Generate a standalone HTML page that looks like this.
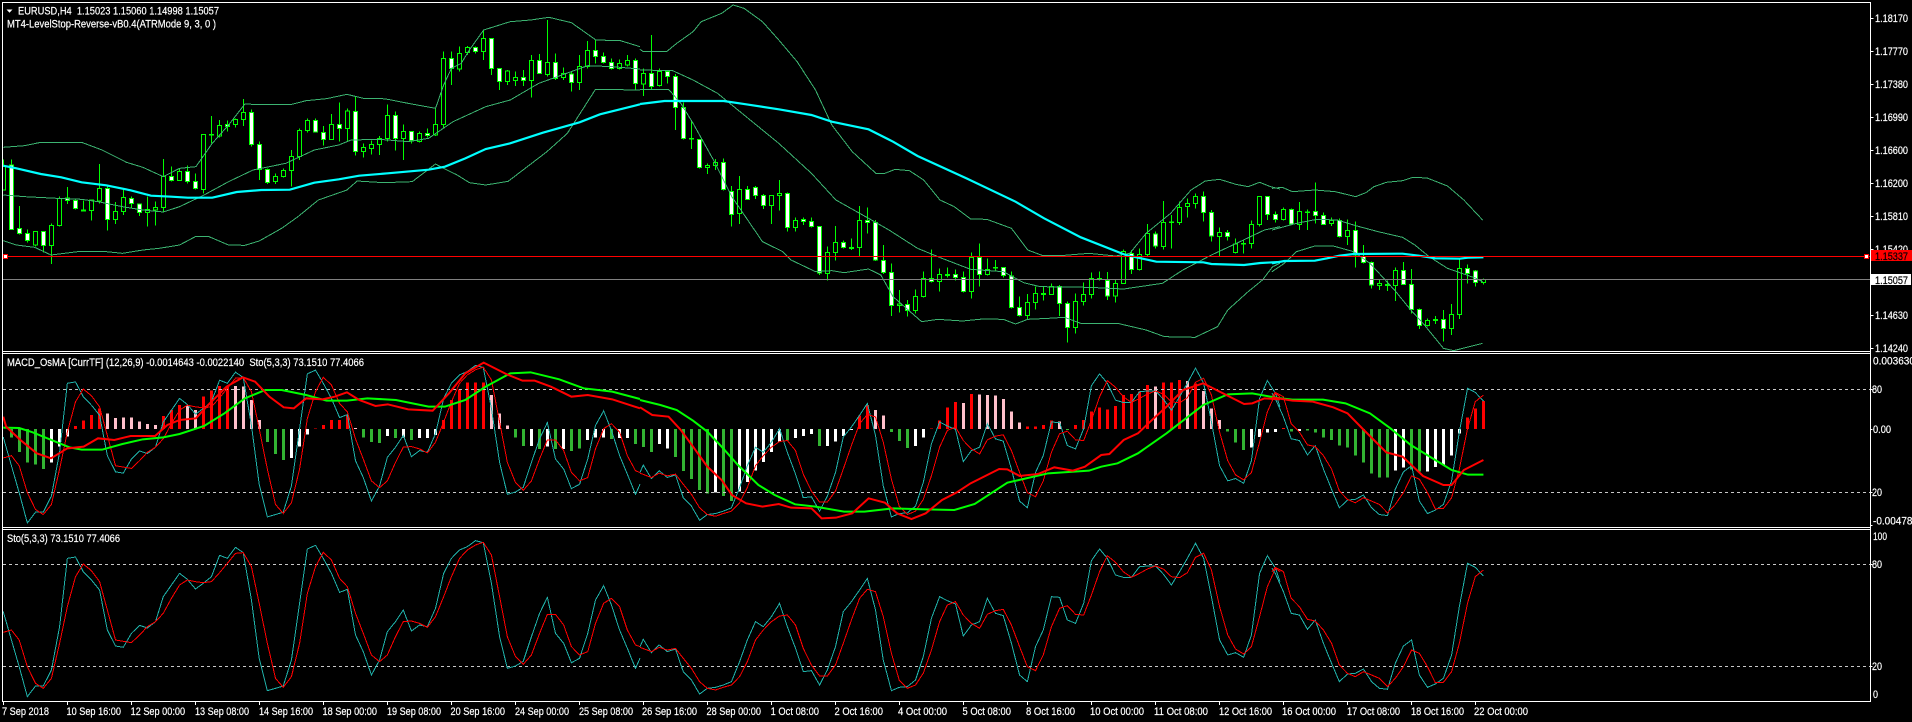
<!DOCTYPE html>
<html><head><meta charset="utf-8"><title>EURUSD,H4</title>
<style>
html,body{margin:0;padding:0;background:#000;width:1912px;height:722px;overflow:hidden}
svg{display:block}
svg *{vector-effect:non-scaling-stroke}
text{font-family:"Liberation Sans",sans-serif;font-size:11px;fill:#fff;stroke:#fff;stroke-width:.2}
.dk{fill:#000;stroke:#000}
.band{fill:none;stroke:#3cb371;stroke-width:1;shape-rendering:crispEdges}
.ma{fill:none;stroke:#00ffff;stroke-width:2.2}
.teal{fill:none;stroke:#20b2aa;stroke-width:1;shape-rendering:crispEdges}
.rs{fill:none;stroke:#ff0000;stroke-width:1;shape-rendering:crispEdges}
.tg{fill:none;stroke:#00ff00;stroke-width:2}
.tr{fill:none;stroke:#ff0000;stroke-width:2}
</style></head><body>
<svg width="1912" height="722" viewBox="0 0 1912 722" xmlns="http://www.w3.org/2000/svg">
<rect width="1912" height="722" fill="#000"/>
<defs>
<clipPath id="c1"><rect x="3" y="3" width="1867" height="348"/></clipPath>
<clipPath id="c2"><rect x="3" y="354" width="1867" height="173"/></clipPath>
<g id="sto">
<g transform="scale(.40816,.33333)">
<polyline class="teal" points="8,785 28,870 47,950 67,1040 87,1008 106,1008 126,960 146,830 165,625 185,621 204,665 224,690 244,720 263,840 283,888 302,892 322,850 342,826 361,834 381,815 400,740 420,705 440,670 459,688 479,717 498,700 518,680 538,616 557,625 577,592 596,608 616,750 635,925 655,1022 675,1015 694,1008 714,930 734,760 753,597 773,586 792,625 812,670 832,727 851,718 871,855 890,905 910,975 930,930 949,845 969,815 988,780 1008,843 1028,825 1047,830 1067,775 1087,670 1106,625 1126,600 1145,590 1165,572 1184,578 1204,700 1224,860 1243,955 1263,948 1282,934 1302,860 1322,790 1341,742 1361,850 1381,880 1400,938 1420,925 1440,850 1459,750 1479,707 1498,765 1518,840 1537,895 1557,955 1568,925"/>
<polyline class="rs" points="8,847 28,840 47,870 67,950 87,1000 106,1015 126,985 146,880 165,770 185,680 204,642 224,662 244,695 263,780 283,870 322,878 342,855 361,830 381,815 400,790 420,745 440,705 459,690 479,695 498,698 518,695 538,668 557,640 577,610 596,608 616,650 635,760 655,880 675,985 694,1012 714,980 734,880 753,730 773,650 792,607 812,630 832,685 851,710 871,790 890,850 910,915 930,935 949,915 969,860 988,815 1008,813 1028,820 1047,832 1067,800 1087,740 1106,680 1126,625 1145,600 1165,585 1184,577 1204,615 1224,740 1243,860 1263,920 1282,943 1302,915 1322,850 1341,793 1361,793 1381,825 1400,890 1420,915 1440,905 1459,820 1479,760 1498,745 1518,770 1537,840 1557,885 1568,890"/>
</g>
<g transform="translate(640,0) scale(.40816,.33333)">
<polyline class="teal" points="0,890 8,868 28,908 47,885 67,905 87,897 106,965 126,990 146,1032 165,1015 185,1012 204,1005 224,995 244,935 263,870 283,815 302,830 322,800 342,760 361,830 381,895 400,965 420,962 440,1005 459,960 479,890 498,785 518,755 538,720 557,685 577,780 596,930 616,1022 635,1012 655,1010 675,990 694,920 714,805 734,740 753,752 773,762 792,858 812,825 832,815 851,745 871,790 890,797 910,880 930,975 949,995 969,890 988,840 1008,740 1028,742 1047,810 1067,820 1087,760 1106,632 1126,597 1145,625 1165,675 1184,682 1204,682 1224,650 1243,648 1263,648 1282,672 1302,705 1322,665 1341,625 1361,580 1381,625 1400,740 1420,870 1440,915 1459,908 1479,922 1498,855 1518,670 1537,617 1557,655 1568,695"/>
<polyline class="rs" points="0,892 28,905 47,892 67,900 87,895 106,925 126,955 146,995 165,1015 185,1020 204,1012 224,1005 244,980 263,935 283,870 302,840 322,815 342,798 361,795 381,825 400,895 420,945 440,978 459,978 479,945 498,880 518,810 538,745 557,718 577,725 596,800 616,910 635,990 655,1015 675,1005 694,970 714,900 734,815 753,765 773,755 792,795 812,820 832,835 851,793 871,782 890,778 910,825 930,890 949,950 969,962 988,915 1008,830 1028,775 1047,767 1067,793 1087,795 1106,735 1126,665 1145,617 1165,637 1184,665 1204,682 1224,670 1243,657 1263,648 1282,657 1302,680 1322,683 1341,668 1361,622 1381,610 1400,660 1420,770 1440,855 1459,897 1479,912 1498,890 1518,800 1537,710 1557,655 1568,665"/>
</g>
<g transform="translate(1272,0) scale(.40816,.33333)">
<polyline class="teal" points="0,655 8,670 28,725 47,790 67,795 87,838 106,810 126,880 146,940 165,995 185,972 204,970 224,957 244,995 263,1015 283,1018 302,940 322,888 342,870 361,975 381,1012 400,1002 420,985 440,915 459,770 479,640 498,652 518,678"/>
<polyline class="rs" points="0,665 8,652 28,665 47,745 67,770 87,808 106,813 126,840 146,880 165,945 185,970 204,980 224,965 244,975 263,985 283,1010 302,985 322,950 342,900 361,910 381,950 400,998 420,997 440,965 459,880 479,760 498,680 518,660"/>
</g>
</g>
</defs>

<!-- main panel -->
<g clip-path="url(#c1)">
<g transform="translate(.5,0) scale(1,.33333)" shape-rendering="crispEdges">
<path fill="none" stroke="#00ff00" d="M3 478V570M11 478V688M19 618V703M27 688V728M35 693V740M43 693V758M51 670V792M59 590V680M67 561V612M75 595V628M83 602V632M91 598V662M99 492V610M107 560V692M115 606V672M123 567V645M131 590V626M139 610V648M147 590V680M155 605V677M163 477V638M171 500V545M179 505V543M187 497V550M195 520V568M203 402V580M211 348V430M219 360V412M227 362V395M235 355V382M243 297V378M251 328V440M259 425V540M267 506V552M275 520V552M283 505V532M291 450V560M299 385V480M307 355V398M315 355V398M323 378V437M331 342V420M339 307V425M347 325V425M355 290V467M363 430V473M371 422V463M379 408V465M387 313V425M395 335V452M403 373V480M411 393V430M419 395V427M427 385V412M435 325V408M443 155V383M451 155V255M459 140V215M467 138V165M475 140V160M483 90V180M491 115V225M499 205V270M507 210V255M515 215V258M523 210V258M531 165V293M539 162V222M547 60V230M555 160V240M563 203V240M571 215V275M579 165V270M587 123V205M595 120V190M603 158V190M611 175V208M619 178V208M627 165V200M635 175V272M643 205V288M651 105V268M659 205V260M667 212V250M675 222V390M683 307V418M691 360V447M699 418V505M707 490V522M715 477V510M723 475V572M731 558V680M739 528V672M747 558V600M755 558V597M763 582V627M771 585V672M779 540V632M787 578V695M795 652V695M803 652V675M811 652V682M819 678V825M827 740V842M835 678V782M843 722V745M851 715V750M859 618V770M867 622V700M875 660V783M883 735V822M891 790V948M899 870V938M907 900V950M915 868V940M923 815V892M931 748V848M939 805V875M947 803V832M955 808V842M963 815V878M971 758V895M979 730V860M987 775V826M995 780V815M1003 802V832M1011 815V925M1019 890V950M1027 882V960M1035 860V928M1043 858V902M1051 850V885M1059 855V948M1067 905V1028M1075 880V1000M1083 848V917M1091 818V895M1099 815V842M1107 816V900M1115 840V908M1123 748V852M1131 750V822M1139 745V812M1147 672V768M1155 695V745M1163 603V748M1171 645V745M1179 605V675M1187 595V652M1195 580V625M1203 575V665M1211 630V725M1219 682V768M1227 690V722M1235 715V760M1243 720V760M1251 662V745M1259 588V680M1267 588V660M1275 635V668M1283 622V662M1291 625V675M1299 606V690M1307 628V690M1315 548V670M1323 637V675M1331 652V678M1339 655V712M1347 658V735M1355 665V803M1363 735V790M1371 785V865M1379 840V870M1387 842V873M1395 802V903M1403 786V855M1411 807V940M1419 925V987M1427 955V980M1435 948V972M1443 930V1025M1451 912V1005M1459 775V957M1467 793V850M1475 810V860M1483 836V853"/>
<path fill="#000" stroke="#00ff00" d="M1 500h4V570h-4zM33 695h4V735h-4zM49 676h4V737h-4zM57 595h4V677h-4zM81 630h4V633h-4zM89 600h4V632h-4zM97 565h4V603h-4zM113 634h4V658h-4zM121 592h4V634h-4zM145 629h4V638h-4zM153 622h4V630h-4zM161 530h4V622h-4zM177 514h4V541h-4zM201 403h4V568h-4zM209 403h4V405h-4zM217 376h4V408h-4zM233 358h4V373h-4zM241 337h4V358h-4zM273 529h4V544h-4zM281 511h4V529h-4zM289 470h4V512h-4zM297 391h4V470h-4zM305 361h4V392h-4zM329 373h4V419h-4zM345 333h4V385h-4zM361 443h4V454h-4zM369 433h4V445h-4zM377 415h4V433h-4zM385 346h4V416h-4zM401 394h4V416h-4zM417 400h4V424h-4zM433 373h4V405h-4zM441 175h4V373h-4zM457 160h4V207h-4zM465 142h4V157h-4zM481 115h4V155h-4zM505 213h4V245h-4zM513 232h4V241h-4zM529 181h4V241h-4zM545 187h4V224h-4zM561 220h4V233h-4zM577 199h4V248h-4zM585 151h4V200h-4zM617 190h4V205h-4zM625 181h4V195h-4zM641 220h4V252h-4zM657 214h4V256h-4zM689 415h4V417h-4zM705 496h4V503h-4zM713 488h4V497h-4zM737 568h4V640h-4zM769 586h4V616h-4zM777 580h4V586h-4zM793 661h4V682h-4zM825 758h4V820h-4zM833 727h4V757h-4zM849 742h4V746h-4zM857 661h4V742h-4zM897 912h4V916h-4zM913 889h4V932h-4zM921 836h4V889h-4zM937 824h4V844h-4zM945 823h4V826h-4zM969 772h4V875h-4zM985 809h4V823h-4zM993 802h4V804h-4zM1025 907h4V946h-4zM1033 880h4V907h-4zM1041 881h4V884h-4zM1049 860h4V884h-4zM1073 905h4V982h-4zM1081 884h4V905h-4zM1089 835h4V884h-4zM1097 835h4V838h-4zM1113 851h4V888h-4zM1121 755h4V850h-4zM1137 764h4V808h-4zM1145 700h4V764h-4zM1161 668h4V740h-4zM1169 666h4V668h-4zM1177 622h4V668h-4zM1185 611h4V620h-4zM1193 590h4V611h-4zM1217 698h4V710h-4zM1233 732h4V758h-4zM1241 730h4V732h-4zM1249 673h4V730h-4zM1257 589h4V674h-4zM1281 628h4V658h-4zM1297 634h4V673h-4zM1305 636h4V638h-4zM1329 661h4V670h-4zM1345 691h4V709h-4zM1377 850h4V856h-4zM1385 854h4V857h-4zM1393 811h4V856h-4zM1425 961h4V976h-4zM1433 958h4V961h-4zM1449 943h4V985h-4zM1457 805h4V943h-4zM1481 839h4V847h-4z"/>
<path fill="#fff" stroke="#00ff00" d="M9 495h4V688h-4zM17 686h4V701h-4zM25 700h4V722h-4zM41 695h4V737h-4zM65 594h4V602h-4zM73 602h4V625h-4zM105 565h4V658h-4zM129 596h4V610h-4zM137 612h4V637h-4zM169 530h4V541h-4zM185 515h4V545h-4zM193 545h4V565h-4zM225 373h4V380h-4zM249 337h4V433h-4zM257 433h4V508h-4zM265 508h4V548h-4zM313 361h4V396h-4zM321 398h4V418h-4zM337 373h4V385h-4zM353 334h4V454h-4zM393 346h4V416h-4zM409 394h4V422h-4zM425 400h4V407h-4zM449 175h4V205h-4zM473 143h4V155h-4zM489 115h4V205h-4zM497 205h4V244h-4zM521 232h4V241h-4zM537 181h4V220h-4zM553 187h4V235h-4zM569 222h4V248h-4zM593 152h4V170h-4zM601 170h4V187h-4zM609 187h4V205h-4zM633 181h4V250h-4zM649 220h4V260h-4zM665 214h4V229h-4zM673 229h4V322h-4zM681 323h4V416h-4zM697 419h4V502h-4zM721 488h4V568h-4zM729 574h4V643h-4zM745 568h4V598h-4zM753 562h4V586h-4zM761 586h4V616h-4zM785 580h4V682h-4zM801 658h4V664h-4zM809 664h4V680h-4zM817 680h4V819h-4zM841 728h4V742h-4zM865 661h4V668h-4zM873 667h4V780h-4zM881 781h4V817h-4zM889 817h4V916h-4zM905 913h4V932h-4zM929 836h4V844h-4zM953 824h4V832h-4zM961 832h4V875h-4zM977 772h4V823h-4zM1001 803h4V826h-4zM1009 828h4V922h-4zM1017 923h4V946h-4zM1057 860h4V910h-4zM1065 910h4V982h-4zM1105 842h4V888h-4zM1129 760h4V808h-4zM1153 702h4V738h-4zM1201 590h4V637h-4zM1209 637h4V708h-4zM1225 698h4V710h-4zM1265 589h4V644h-4zM1273 644h4V658h-4zM1289 628h4V672h-4zM1313 635h4V647h-4zM1321 647h4V673h-4zM1337 661h4V709h-4zM1353 691h4V765h-4zM1361 770h4V787h-4zM1369 787h4V855h-4zM1401 811h4V853h-4zM1409 853h4V928h-4zM1417 928h4V976h-4zM1441 958h4V985h-4zM1465 805h4V820h-4zM1473 813h4V847h-4z"/>
</g>
<g transform="scale(.40816,.33333)">
<polyline class="band" points="8,442 60,437 100,427 200,427 250,450 310,487 350,502 400,530 440,505 480,500 520,430 560,375 600,312 640,314 715,313 750,302 800,296 850,283 890,295 930,295 950,298 1000,310 1067,325 1087,255 1106,205 1130,190 1150,150 1185,90 1250,65 1300,60 1345,52 1400,68 1460,120 1520,122 1568,140"/>
<polyline class="band" points="8,585 60,590 140,595 200,598 240,605 300,620 350,630 400,636 440,620 500,585 560,545 620,510 700,490 770,450 830,435 860,420 930,418 1000,425 1050,415 1110,365 1190,320 1250,300 1320,250 1440,197 1500,200 1568,207"/>
<polyline class="band" points="8,722 40,735 85,742 125,765 190,755 260,755 300,760 350,750 390,745 440,735 480,709 510,709 560,735 600,736 635,723 690,685 730,650 780,600 850,570 875,543 940,548 1010,545 1067,492 1087,505 1120,525 1150,548 1190,555 1245,544 1340,455 1390,400 1459,268 1568,270"/>
<polyline class="ma" points="8,497 40,505 100,522 150,532 200,547 260,556 320,571 370,587 420,590 460,593 520,593 580,576 640,570 710,569 770,548 830,538 880,527 950,520 1050,509 1090,500 1140,475 1190,447 1250,430 1330,398 1420,367 1470,343 1568,313"/>
</g>
<g transform="translate(640,0) scale(.40816,.33333)">
<polyline class="band" points="0,148 8,155 65,155 90,130 130,95 150,65 200,40 228,15 255,25 300,65 340,120 385,185 430,270 470,375 520,455 578,520 600,520 625,508 660,512 695,540 735,600 770,620 810,657 850,658 910,685 950,750 985,766 1030,767 1100,760 1165,768 1200,760 1240,700 1300,640 1350,570 1385,543 1420,538 1460,553 1490,560 1518,547 1545,560 1568,567"/>
<polyline class="band" points="0,210 80,212 130,240 190,280 250,340 340,430 420,520 480,600 560,655 610,690 680,745 740,775 810,808 890,815 940,848 980,860 1100,862 1185,867 1280,850 1330,810 1400,765 1470,725 1530,690 1568,680"/>
<polyline class="band" points="0,268 70,268 100,310 130,370 180,480 225,590 300,725 350,755 370,780 430,815 470,812 500,818 560,807 590,825 620,890 690,965 730,958 790,963 840,957 890,958 920,972 950,958 1000,955 1040,952 1080,970 1170,970 1240,990 1285,1010 1360,1012 1415,980 1440,930 1490,875 1525,840 1550,800 1568,790"/>
<polyline class="ma" points="0,312 60,303 205,303 260,313 340,328 420,345 470,365 560,388 620,425 680,468 800,535 920,605 990,655 1080,712 1190,765 1265,785 1380,787 1400,792 1480,795 1520,789 1568,786"/>
</g>
<g transform="translate(1272,0) scale(.40816,.33333)">
<polyline class="band" points="0,565 25,562 50,575 105,570 155,575 205,590 230,578 250,560 280,547 320,542 345,532 380,534 430,558 470,600 516,660"/>
<polyline class="band" points="0,690 60,670 110,658 160,660 205,677 260,695 320,712 350,735 385,770 430,805 500,835 516,845"/>
<polyline class="band" points="0,815 30,790 60,755 105,738 150,738 200,755 240,790 300,870 340,930 370,970 420,1045 445,1052 516,1030"/>
<polyline class="ma" points="0,790 30,783 105,782 135,775 165,767 200,762 320,761 360,767 400,775 460,776 480,773 518,772"/>
</g>
</g>
<rect x="3" y="279" width="1867" height="1" fill="#808080"/>
<rect x="3" y="256" width="1867" height="1" fill="#ff0000"/>
<rect x="3.5" y="254.5" width="4" height="4" fill="#fff" stroke="#f00" stroke-width="1" shape-rendering="crispEdges"/>
<rect x="1864.5" y="254.5" width="4" height="4" fill="#fff" stroke="#f00" stroke-width="1" shape-rendering="crispEdges"/>

<!-- panel 2 histogram -->
<g clip-path="url(#c2)">
<g transform="translate(.5,350) scale(1,.33333)" shape-rendering="crispEdges" fill="none" stroke-width="3">
<path stroke="#32b432" d="M11 237V262M19 237V306M27 237V338M35 237V343M43 237V357M267 237V276M275 237V312M283 237V330M363 237V262M371 237V276M379 237V279M395 237V264M411 237V270M515 237V262M523 237V288M539 237V297M555 237V297M571 237V303M579 237V295M611 237V267M635 237V282M643 237V291M651 237V306M675 237V321M683 237V363M691 237V387M699 237V420M707 237V430M723 237V438M731 237V453M787 237V272M819 237V288M891 237V246M899 237V273M907 237V294M1067 237V240M1227 237V245M1235 237V278M1243 237V300M1291 237V245M1307 237V242M1315 237V248M1323 237V263M1331 237V270M1339 237V287M1347 237V293M1355 237V317M1363 237V338M1371 237V371M1379 237V383M1387 237V383M1411 237V359M1419 237V365"/>
<path stroke="#fff" d="M51 237V338M59 237V290M67 237V260M291 237V324M299 237V290M307 237V254M387 237V258M403 237V262M419 237V264M427 237V264M435 237V255M531 237V288M547 237V290M563 237V297M587 237V270M595 237V262M603 237V262M619 237V264M627 237V264M659 237V282M667 237V296M715 237V428M739 237V425M747 237V396M755 237V361M763 237V336M771 237V306M779 237V274M795 237V264M803 237V258M811 237V252M827 237V288M835 237V274M843 237V258M851 237V240M915 237V288M923 237V262M1251 237V293M1259 237V261M1267 237V248M1275 237V246M1299 237V243M1395 237V361M1403 237V353M1427 237V365M1435 237V351M1443 237V345M1451 237V317M1459 237V250"/>
<path stroke="#ff0000" d="M75 228V237M83 212V237M91 195V237M99 175V237M163 198V237M171 180V237M179 165V237M203 140V237M211 122V237M219 108V237M227 108V237M315 235V237M323 225V237M331 210V237M339 210V237M347 195V237M443 210V237M451 150V237M459 118V237M467 97V237M475 97V237M483 97V237M859 197V237M867 165V237M931 235V237M939 212V237M947 172V237M955 156V237M971 132V237M1027 230V237M1035 230V237M1043 225V237M1051 212V237M1075 225V237M1083 210V237M1091 185V237M1099 172V237M1107 178V237M1115 168V237M1123 135V237M1131 132V237M1139 125V237M1147 105V237M1163 98V237M1171 97V237M1179 90V237M1195 100V237M1283 234V237M1467 202V237M1475 175V237M1483 153V237"/>
<path stroke="#ffc0cb" d="M107 190V237M115 204V237M123 203V237M131 203V237M139 215V237M147 222V237M155 225V237M187 167V237M195 180V237M235 108V237M243 110V237M251 150V237M259 210V237M491 135V237M499 190V237M507 226V237M355 234V237M875 180V237M883 197V237M963 159V237M979 133V237M987 135V237M995 136V237M1003 147V237M1011 185V237M1019 218V237M1059 215V237M1155 110V237M1187 93V237M1203 123V237M1211 175V237M1219 210V237"/>
</g>
</g>

<!-- dashed levels -->
<g stroke="#c8c8c8" stroke-width="1" stroke-dasharray="3 3" shape-rendering="crispEdges">
<path d="M3 389.5H1870M3 492.5H1870M3 564.5H1870M3 666.5H1870"/>
</g>

<!-- stochastic lines -->
<use href="#sto" transform="translate(0,172.9) scale(1,1.0098)"/>
<use href="#sto" transform="translate(0,350)"/>

<!-- thick lines -->
<g transform="translate(0,350) scale(.40816,.33333)">
<polyline class="tg" points="8,233 47,234 80,247 130,272 170,292 200,299 250,299 300,282 350,268 400,262 440,252 500,228 550,190 600,145 650,120 690,120 750,135 800,152 850,152 900,145 970,150 1050,170 1090,170 1140,150 1190,110 1250,70 1300,67 1370,88 1430,115 1500,125 1568,147"/>
<polyline class="tr" points="8,200 15,230 50,270 90,310 125,325 165,295 205,290 240,265 280,270 320,258 380,258 410,225 440,210 480,205 510,165 555,110 595,82 625,95 660,140 695,172 720,175 750,145 790,148 820,140 850,127 880,150 920,168 950,163 1000,178 1060,182 1100,130 1140,70 1185,38 1240,72 1280,92 1310,92 1350,110 1400,140 1440,135 1500,148 1568,175"/>
</g>
<g transform="translate(640,350) scale(.40816,.33333)">
<polyline class="tg" points="0,150 50,165 90,180 130,212 165,245 200,290 240,345 290,405 330,435 380,463 430,470 500,485 550,485 620,475 700,478 770,480 820,462 900,398 1000,370 1100,362 1130,350 1170,340 1220,310 1290,250 1380,165 1440,133 1500,130 1568,145"/>
<polyline class="tr" points="0,172 30,195 70,200 100,240 130,290 165,350 200,390 225,435 260,460 300,470 340,462 370,473 420,475 445,505 480,503 520,490 560,445 600,458 630,490 665,507 700,490 740,450 775,428 810,400 880,357 900,358 930,378 975,372 1015,352 1060,362 1090,350 1130,315 1150,312 1185,270 1220,250 1250,215 1290,170 1330,120 1380,100 1420,125 1480,162 1500,160 1530,145 1568,148"/>
</g>
<g transform="translate(1272,350) scale(.40816,.33333)">
<polyline class="tg" points="0,142 50,149 125,149 180,160 240,190 290,235 340,285 400,330 440,360 480,374 518,374"/>
<polyline class="tr" points="0,142 50,152 100,155 150,172 185,190 225,240 280,307 320,320 370,378 420,405 440,405 470,360 518,330"/>
</g>

<!-- frames -->
<g fill="#fff" shape-rendering="crispEdges">
<rect x="2" y="2" width="1869" height="1"/>
<rect x="2" y="351" width="1869" height="1"/>
<rect x="2" y="353" width="1869" height="1"/>
<rect x="2" y="527" width="1869" height="1"/>
<rect x="2" y="529" width="1869" height="1"/>
<rect x="2" y="701" width="1869" height="1"/>
<rect x="2" y="2" width="1" height="700"/>
<rect x="1870" y="2" width="1" height="700"/>
</g>
<path stroke="#fff" fill="none" shape-rendering="crispEdges" d="M1870.5 18.5h3M1870.5 51.5h3M1870.5 84.5h3M1870.5 117.5h3M1870.5 150.5h3M1870.5 183.5h3M1870.5 216.5h3M1870.5 249.5h3M1870.5 315.5h3M1870.5 348.5h3M1870.5 389.5h2M1870.5 429.5h2M1870.5 492.5h2M1870.5 525.5h2M1870.5 564.5h2M1870.5 666.5h2M3.5 702V705M67.5 702V705M131.5 702V705M195.5 702V705M259.5 702V705M323.5 702V705M387.5 702V705M451.5 702V705M515.5 702V705M579.5 702V705M643.5 702V705M707.5 702V705M771.5 702V705M835.5 702V705M899.5 702V705M963.5 702V705M1027.5 702V705M1091.5 702V705M1155.5 702V705M1219.5 702V705M1283.5 702V705M1347.5 702V705M1411.5 702V705M1475.5 702V705"/>

<!-- legends -->
<path d="M6.5 9.5h6l-3 3.2z" fill="#fff"/>
<text x="18" y="14.5" textLength="201" lengthAdjust="spacingAndGlyphs" xml:space="preserve">EURUSD,H4  1.15023 1.15060 1.14998 1.15057</text>
<text x="7" y="27.5" textLength="209" lengthAdjust="spacingAndGlyphs">MT4-LevelStop-Reverse-vB0.4(ATRMode 9, 3, 0 )</text>
<text x="7" y="366" textLength="357" lengthAdjust="spacingAndGlyphs" xml:space="preserve">MACD_OsMA [CurrTF] (12,26,9) -0.0014643 -0.0022140  Sto(5,3,3) 73.1510 77.4066</text>
<text x="7" y="542" textLength="113" lengthAdjust="spacingAndGlyphs">Sto(5,3,3) 73.1510 77.4066</text>

<!-- price axis -->
<g>
<text x="1875" y="22" textLength="33" lengthAdjust="spacingAndGlyphs">1.18170</text>
<text x="1875" y="55" textLength="33" lengthAdjust="spacingAndGlyphs">1.17770</text>
<text x="1875" y="88" textLength="33" lengthAdjust="spacingAndGlyphs">1.17380</text>
<text x="1875" y="121" textLength="33" lengthAdjust="spacingAndGlyphs">1.16990</text>
<text x="1875" y="154" textLength="33" lengthAdjust="spacingAndGlyphs">1.16600</text>
<text x="1875" y="187" textLength="33" lengthAdjust="spacingAndGlyphs">1.16200</text>
<text x="1875" y="220" textLength="33" lengthAdjust="spacingAndGlyphs">1.15810</text>
<text x="1875" y="253" textLength="33" lengthAdjust="spacingAndGlyphs">1.15420</text>
<text x="1875" y="319" textLength="33" lengthAdjust="spacingAndGlyphs">1.14630</text>
<text x="1875" y="352" textLength="33" lengthAdjust="spacingAndGlyphs">1.14240</text>
<rect x="1871" y="250" width="41" height="11" fill="#ff0000"/>
<text class="dk" x="1875" y="260" textLength="33" lengthAdjust="spacingAndGlyphs">1.15337</text>
<rect x="1871" y="274" width="40" height="11" fill="#fff"/>
<text class="dk" x="1875" y="284" textLength="33" lengthAdjust="spacingAndGlyphs">1.15057</text>
<text x="1873" y="364.5" textLength="42" lengthAdjust="spacingAndGlyphs">0.003630</text>
<text x="1872" y="393" textLength="10" lengthAdjust="spacingAndGlyphs">80</text>
<text x="1873" y="433" textLength="18" lengthAdjust="spacingAndGlyphs">0.00</text>
<text x="1872" y="496" textLength="10" lengthAdjust="spacingAndGlyphs">20</text>
<text x="1873" y="524.5" textLength="45" lengthAdjust="spacingAndGlyphs">-0.004784</text>
<text x="1873" y="540" textLength="14" lengthAdjust="spacingAndGlyphs">100</text>
<text x="1872" y="568" textLength="10" lengthAdjust="spacingAndGlyphs">80</text>
<text x="1872" y="670" textLength="10" lengthAdjust="spacingAndGlyphs">20</text>
<text x="1873" y="698" textLength="5" lengthAdjust="spacingAndGlyphs">0</text>
</g>

<!-- time axis -->
<g>
<text x="2" y="715" textLength="47" lengthAdjust="spacingAndGlyphs">7 Sep 2018</text>
<text x="66.5" y="715" textLength="54.5" lengthAdjust="spacingAndGlyphs">10 Sep 16:00</text>
<text x="130.6" y="715" textLength="54.5" lengthAdjust="spacingAndGlyphs">12 Sep 00:00</text>
<text x="195" y="715" textLength="54" lengthAdjust="spacingAndGlyphs">13 Sep 08:00</text>
<text x="259" y="715" textLength="54" lengthAdjust="spacingAndGlyphs">14 Sep 16:00</text>
<text x="322.5" y="715" textLength="54.5" lengthAdjust="spacingAndGlyphs">18 Sep 00:00</text>
<text x="387" y="715" textLength="54" lengthAdjust="spacingAndGlyphs">19 Sep 08:00</text>
<text x="450.5" y="715" textLength="54.5" lengthAdjust="spacingAndGlyphs">20 Sep 16:00</text>
<text x="515" y="715" textLength="54" lengthAdjust="spacingAndGlyphs">24 Sep 00:00</text>
<text x="579" y="715" textLength="54" lengthAdjust="spacingAndGlyphs">25 Sep 08:00</text>
<text x="642" y="715" textLength="55" lengthAdjust="spacingAndGlyphs">26 Sep 16:00</text>
<text x="706.5" y="715" textLength="54.5" lengthAdjust="spacingAndGlyphs">28 Sep 00:00</text>
<text x="770.6" y="715" textLength="48.4" lengthAdjust="spacingAndGlyphs">1 Oct 08:00</text>
<text x="834.5" y="715" textLength="48.5" lengthAdjust="spacingAndGlyphs">2 Oct 16:00</text>
<text x="898" y="715" textLength="49" lengthAdjust="spacingAndGlyphs">4 Oct 00:00</text>
<text x="962.5" y="715" textLength="48.5" lengthAdjust="spacingAndGlyphs">5 Oct 08:00</text>
<text x="1026" y="715" textLength="49" lengthAdjust="spacingAndGlyphs">8 Oct 16:00</text>
<text x="1090" y="715" textLength="54" lengthAdjust="spacingAndGlyphs">10 Oct 00:00</text>
<text x="1154" y="715" textLength="54" lengthAdjust="spacingAndGlyphs">11 Oct 08:00</text>
<text x="1219" y="715" textLength="53" lengthAdjust="spacingAndGlyphs">12 Oct 16:00</text>
<text x="1282" y="715" textLength="54" lengthAdjust="spacingAndGlyphs">16 Oct 00:00</text>
<text x="1347" y="715" textLength="53" lengthAdjust="spacingAndGlyphs">17 Oct 08:00</text>
<text x="1411" y="715" textLength="53" lengthAdjust="spacingAndGlyphs">18 Oct 16:00</text>
<text x="1474" y="715" textLength="54" lengthAdjust="spacingAndGlyphs">22 Oct 00:00</text>
</g>
</svg>
</body></html>
